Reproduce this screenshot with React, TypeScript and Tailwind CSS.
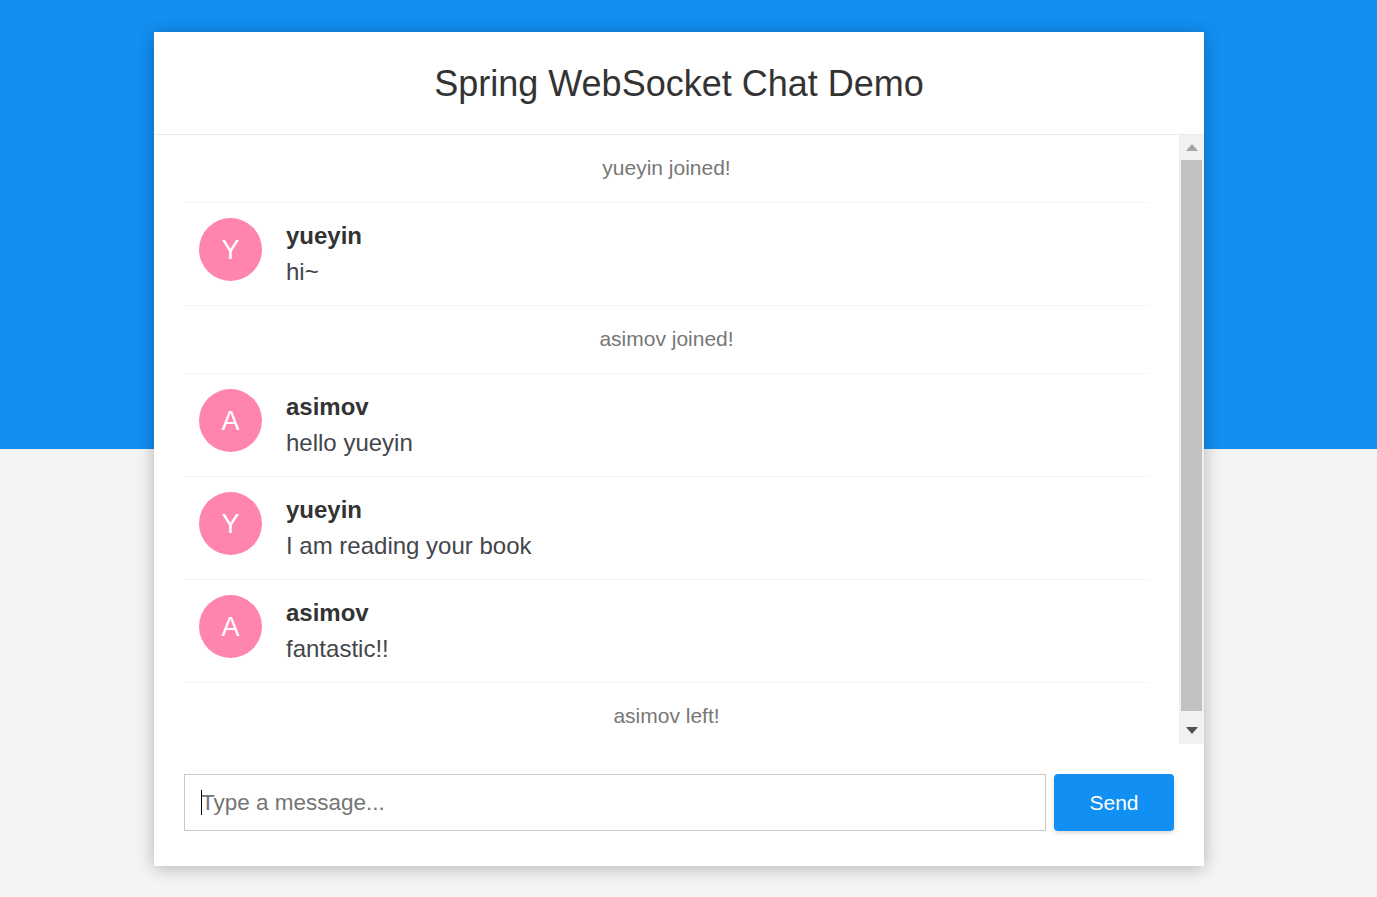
import React from "react";

type Item =
  | { kind: "event"; text: string }
  | { kind: "msg"; name: string; text: string };

const items: Item[] = [
  { kind: "event", text: "yueyin joined!" },
  { kind: "msg", name: "yueyin", text: "hi~" },
  { kind: "event", text: "asimov joined!" },
  { kind: "msg", name: "asimov", text: "hello yueyin" },
  { kind: "msg", name: "yueyin", text: "I am reading your book" },
  { kind: "msg", name: "asimov", text: "fantastic!!" },
  { kind: "event", text: "asimov left!" },
];

function Row({ item }: { item: Item }) {
  if (item.kind === "event") {
    return (
      <li className="border-b border-[#f4f4f4] px-[30px] pb-[16px] pt-[15px] text-center leading-[36px]">
        <p className="text-[21px] text-[#777]">{item.text}</p>
      </li>
    );
  }
  return (
    <li className="flex border-b border-[#f4f4f4] py-[15px] pl-[15px] pr-[30px] leading-[36px]">
      <div className="flex h-[63px] w-[63px] shrink-0 items-center justify-center rounded-full bg-[#ff85af] text-[27px] uppercase text-white">
        {item.name[0]}
      </div>
      <div className="pl-[24px]">
        <div className="text-[24px] font-bold text-[#333]">{item.name}</div>
        <p className="text-[24px] text-[#43464b]">{item.text}</p>
      </div>
    </li>
  );
}

export default function App() {
  return (
    <div
      className="h-[897px] w-full overflow-hidden bg-[linear-gradient(to_bottom,#128ff2_449px,#f4f4f4_449px)] pt-[32px]"
      style={{ fontFamily: '"Liberation Sans", Arial, sans-serif' }}
    >
      <div className="ml-[154px] w-[1050px] bg-white shadow-[0_2px_16px_rgba(0,0,0,0.27)]">
        <div className="flex h-[103px] items-center justify-center border-b border-[#ececec] pt-[1px]">
          <h2 className="text-[36px] font-normal text-[#333]">Spring WebSocket Chat Demo</h2>
        </div>
        <div className="flex h-[609px]">
          <div className="flex-1 overflow-hidden px-[30px]">
            <ul className="m-0 list-none p-0">
              {items.map((it, i) => (
                <Row key={i} item={it} />
              ))}
            </ul>
          </div>
          <div className="flex w-[25px] flex-col bg-[#f1f1f1]">
            <div className="flex h-[25px] items-center justify-center">
              <svg width="12" height="7" viewBox="0 0 12 7">
                <polygon points="0,7 12,7 6,0" fill="#a3a3a3" />
              </svg>
            </div>
            <div className="mx-[2px] flex-1 bg-[#c1c1c1]" />
            <div className="flex h-[33px] items-end justify-center pb-[10px]">
              <svg width="12" height="7" viewBox="0 0 12 7">
                <polygon points="0,0 12,0 6,7" fill="#505050" />
              </svg>
            </div>
          </div>
        </div>
        <form className="flex px-[30px] pb-[35px] pt-[30px]" onSubmit={(e) => e.preventDefault()}>
          <div className="relative">
            <input
              autoFocus
              placeholder="Type a message..."
              className="h-[57px] w-[862px] border border-[#c8c8c8] px-[16px] text-[22.5px] text-[#333] caret-black outline-none placeholder:text-[#757575]"
            />
            <span className="pointer-events-none absolute left-[17px] top-[16px] h-[25px] w-[1px] bg-black" />
          </div>
          <button
            type="submit"
            className="ml-[8px] h-[57px] w-[120px] rounded-[4px] bg-[#128ff2] text-[21px] text-white shadow-[0_2px_4px_rgba(0,0,0,0.15)]"
          >
            Send
          </button>
        </form>
      </div>
    </div>
  );
}
